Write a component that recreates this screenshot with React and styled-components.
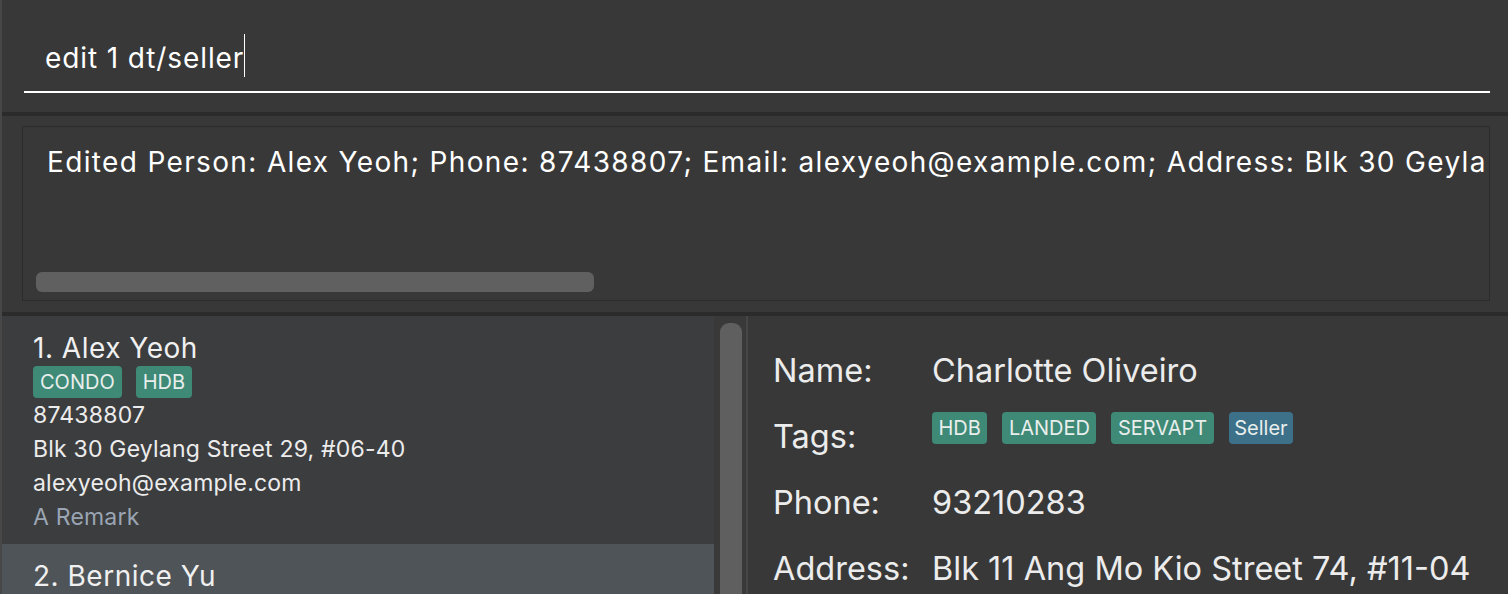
import styled, { createGlobalStyle } from 'styled-components';

const GlobalStyle = createGlobalStyle`
    html, body {
        margin: 0;
        padding: 0;
        background: #383838;
    }
    body {
        font-family: Inter, "Noto Sans", "Liberation Sans", sans-serif;
    }
`

const Window = styled.div`
    display: flex;
    flex-direction: column;
    width: 1508px;
    height: 594px;
    overflow: hidden;
    background: #383838;
    border-left: 2px solid #474747;
    box-sizing: border-box;
`

const CommandArea = styled.div`
    height: 112px;
    padding: 0 18px 0 22px;
    box-sizing: border-box;
`

const CommandInput = styled.div`
    padding: 40px 0 14px 21px;
    border-bottom: 2px solid #ffffff;
    color: #ffffff;
    font-size: 28px;
    letter-spacing: 0.9px;
    line-height: 36px;
    white-space: nowrap;
`

const Caret = styled.span`
    display: inline-block;
    width: 1px;
    height: 43px;
    margin: -6px 0 0 0;
    background: #ffffff;
    vertical-align: -9px;
`

const Separator = styled.div`
    height: 4px;
    background: #2b2b2b;
    flex-shrink: 0;
`

const ResultArea = styled.div`
    padding: 10px 18px 11px 20px;
`

const ResultBox = styled.div`
    display: flex;
    flex-direction: column;
    justify-content: space-between;
    height: 175px;
    box-sizing: border-box;
    border: 1px solid #2c2c2c;
    padding: 17px 2px 8px 13px;
    overflow: hidden;
`

const ResultText = styled.div`
    padding-left: 11px;
    color: #ffffff;
    font-size: 28px;
    letter-spacing: 1.35px;
    line-height: 36px;
    white-space: nowrap;
    overflow: hidden;
`

const HScrollThumb = styled.div`
    width: 558px;
    height: 20px;
    border-radius: 6px;
    background: #606060;
`

const Bottom = styled.div`
    flex: 1;
    display: flex;
    min-height: 0;
`

const PersonList = styled.div`
    width: 712px;
    display: flex;
    flex-direction: column;
    flex-shrink: 0;
`

const Card = styled.div`
    padding: 15px 0 10px 31px;
    background: ${p => (p.$selected ? '#4f5458' : '#3c3d3f')};
    color: #ececec;
`

const CardName = styled.div`
    font-size: 28px;
    letter-spacing: 0.5px;
    line-height: 34px;
    color: #f0f0f0;
`

const TagRow = styled.div`
    display: flex;
    gap: ${p => p.$gap || 14}px;
    margin: ${p => p.$top || 0}px 0 0 ${p => p.$left || 0}px;
    align-self: flex-start;
`

const Tag = styled.span`
    display: inline-flex;
    align-items: center;
    height: 32px;
    padding: 0 ${p => p.$pad || 7}px;
    border-radius: 4px;
    background: ${p => (p.$kind === 'seller' ? '#3c7189' : '#3e8a76')};
    color: #e8eeec;
    font-size: 20px;
`

const CardLine = styled.div`
    font-size: 23px;
    letter-spacing: 0.2px;
    line-height: 34px;
    color: ${p => (p.$muted ? '#9aa5b4' : '#ececec')};
`

const ScrollTrack = styled.div`
    width: 32px;
    padding: 7px 4px 0 6px;
    box-sizing: border-box;
    flex-shrink: 0;
    background: #393939;
`

const VScrollThumb = styled.div`
    height: 400px;
    border-radius: 9px 9px 0 0;
    background: #5f5f5f;
`

const Divider = styled.div`
    width: 2px;
    background: #464646;
    flex-shrink: 0;
`

const Detail = styled.div`
    flex: 1;
    display: grid;
    grid-template-columns: 160px 1fr;
    grid-auto-rows: 66px;
    align-content: start;
    padding: 22px 0 0 25px;
    color: #ececec;
    font-size: 32.5px;
    line-height: 66px;
    white-space: nowrap;
`

const Label = styled.div``

const Value = styled.div`
    margin-left: -1px;
`

const cards = [
    {
        id: 1,
        name: 'Alex Yeoh',
        tags: ['CONDO', 'HDB'],
        phone: '87438807',
        address: 'Blk 30 Geylang Street 29, #06-40',
        email: 'alexyeoh@example.com',
        remark: 'A Remark',
    },
    {
        id: 2,
        name: 'Bernice Yu',
        tags: ['CONDO'],
        phone: '99272758',
        address: 'Blk 30 Lorong 3 Serangoon Gardens, #07-18',
        email: 'berniceyu@example.com',
        remark: '',
        selected: true,
    },
]

function App() {
    return (
        <Window>
            <GlobalStyle />
            <CommandArea>
                <CommandInput>
                    edit 1 dt/seller<Caret />
                </CommandInput>
            </CommandArea>
            <Separator />
            <ResultArea>
                <ResultBox>
                    <ResultText>
                        Edited Person: Alex Yeoh; Phone: 87438807; Email: alexyeoh@example.com; Address: Blk 30 Geylang Street 29, #06-40; Remark: A Remark
                    </ResultText>
                    <HScrollThumb />
                </ResultBox>
            </ResultArea>
            <Separator />
            <Bottom>
                <PersonList>
                    {cards.map(c => (
                        <Card key={c.id} $selected={c.selected}>
                            <CardName>{c.id}. {c.name}</CardName>
                            <TagRow $top={1}>
                                {c.tags.map(t => <Tag key={t}>{t}</Tag>)}
                            </TagRow>
                            <CardLine>{c.phone}</CardLine>
                            <CardLine>{c.address}</CardLine>
                            <CardLine>{c.email}</CardLine>
                            {c.remark && <CardLine $muted>{c.remark}</CardLine>}
                        </Card>
                    ))}
                </PersonList>
                <ScrollTrack>
                    <VScrollThumb />
                </ScrollTrack>
                <Divider />
                <Detail>
                    <Label>Name:</Label>
                    <Value>Charlotte Oliveiro</Value>
                    <Label>Tags:</Label>
                    <TagRow $gap={15} $top={8} $left={-1}>
                        <Tag $pad={6.5}>HDB</Tag>
                        <Tag $pad={6.5}>LANDED</Tag>
                        <Tag $pad={6.5}>SERVAPT</Tag>
                        <Tag $kind="seller" $pad={5.5}>Seller</Tag>
                    </TagRow>
                    <Label>Phone:</Label>
                    <Value>93210283</Value>
                    <Label>Address:</Label>
                    <Value>Blk 11 Ang Mo Kio Street 74, #11-04</Value>
                </Detail>
            </Bottom>
        </Window>
    );
}

export default App;
